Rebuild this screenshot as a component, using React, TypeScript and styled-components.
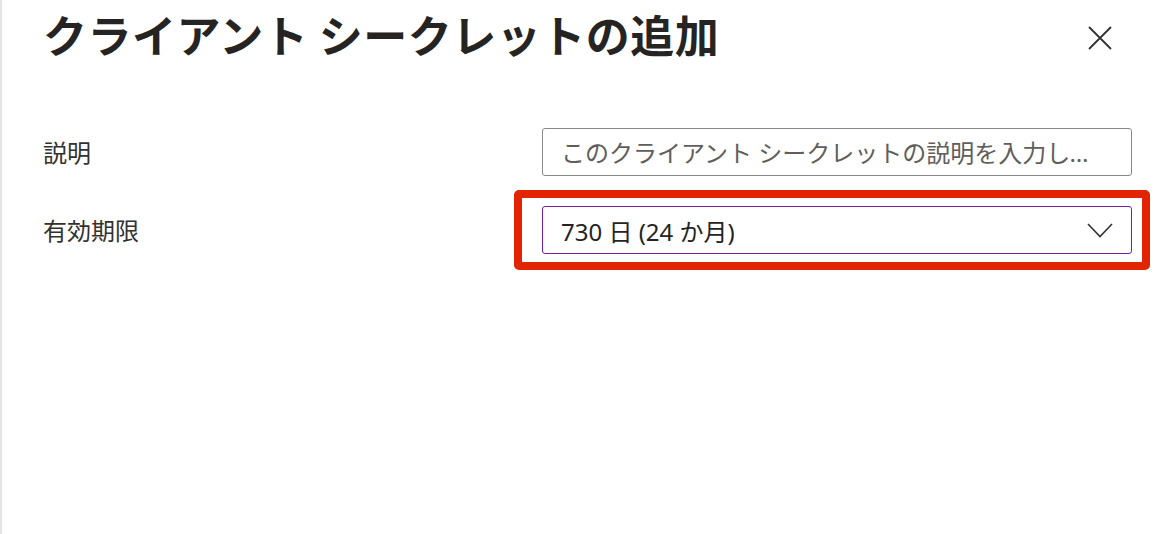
import React from "react";
import styled, { createGlobalStyle } from "styled-components";

const GlobalStyle = createGlobalStyle`
  html, body {
    margin: 0;
    padding: 0;
    background: #ffffff;
  }
  body {
    font-family: "Noto Sans", "Noto Sans CJK JP", sans-serif;
    color: #323130;
  }
`;

const App = () => {
  return (
    <>
      <GlobalStyle />
      <Panel>
        <Header>
          <Title>クライアント シークレットの追加</Title>
          <CloseButton aria-label="閉じる">
            <svg width="24" height="24" viewBox="0 0 24 24">
              <path d="M1 1 L23 23 M23 1 L1 23" stroke="#323130" strokeWidth="1.8" fill="none" />
            </svg>
          </CloseButton>
        </Header>
        <Form>
          <Label>説明</Label>
          <TextInput placeholder="このクライアント シークレットの説明を入力してください" />
          <Label>有効期限</Label>
          <Highlight>
            <Dropdown>
              <DropdownValue>730 日 (24 か月)</DropdownValue>
              <svg width="26" height="15" viewBox="0 0 26 15">
                <path d="M1 1 L13 13.5 L25 1" stroke="#323130" strokeWidth="1.6" fill="none" />
              </svg>
            </Dropdown>
          </Highlight>
        </Form>
      </Panel>
    </>
  );
};

export default App;

const Panel = styled.div`
  height: 534px;
  box-sizing: border-box;
  border-left: 2px solid #e4e4e4;
  padding: 0 36px 0 41px;
`;

const Header = styled.div`
  display: flex;
  align-items: center;
  justify-content: space-between;
  height: 76px;
`;

const Title = styled.h1`
  margin: 0 0 8px 0;
  font-family: "Noto Sans CJK JP", sans-serif;
  font-size: 44px;
  font-weight: 700;
  letter-spacing: 0.5px;
  color: #252423;
  line-height: 1;
`;

const CloseButton = styled.button`
  display: flex;
  align-items: center;
  justify-content: center;
  width: 32px;
  height: 32px;
  margin-right: 16px;
  padding: 0;
  border: none;
  background: transparent;
`;

const Form = styled.div`
  display: grid;
  grid-template-columns: 499px 1fr;
  align-items: center;
  row-gap: 30px;
  margin-top: 52px;
`;

const Label = styled.div`
  font-family: "Noto Sans CJK JP", sans-serif;
  font-size: 24px;
  line-height: 1;
  color: #323130;
`;

const TextInput = styled.input`
  box-sizing: border-box;
  width: 100%;
  height: 48px;
  padding: 0 40px 0 18px;
  border: 1.5px solid #8a8886;
  border-radius: 3px;
  font-family: "Noto Sans", "Noto Sans CJK JP", sans-serif;
  font-size: 24px;
  color: #323130;
  text-overflow: ellipsis;
  outline: none;

  &::placeholder {
    color: #605e5c;
    text-overflow: ellipsis;
  }
`;

const Highlight = styled.div`
  position: relative;

  &::after {
    content: "";
    position: absolute;
    inset: -16px -18px -16px -28px;
    border: 8px solid #e22400;
    border-radius: 5px;
    pointer-events: none;
  }
`;

const Dropdown = styled.div`
  box-sizing: border-box;
  display: flex;
  align-items: center;
  justify-content: space-between;
  height: 48px;
  padding: 0 18px 0 18px;
  border: 1.5px solid #7a1ea1;
  border-radius: 3px;
  background: #ffffff;
`;

const DropdownValue = styled.span`
  font-family: "Noto Sans", "Noto Sans CJK JP", sans-serif;
  font-size: 24px;
  color: #252423;
`;
